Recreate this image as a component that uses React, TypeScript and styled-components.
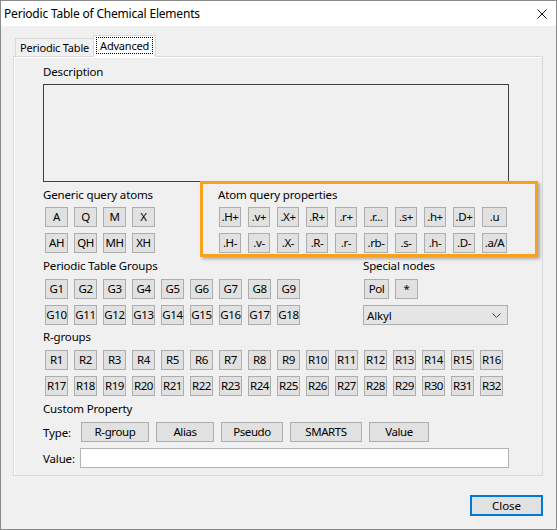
import React from "react";
import styled, { createGlobalStyle } from "styled-components";

const GlobalStyle = createGlobalStyle`
  html, body {
    margin: 0;
    padding: 0;
    background: #fff;
  }
  body {
    font-family: "Noto Sans", "Segoe UI", sans-serif;
    font-size: 11.5px;
    letter-spacing: -0.15px;
    color: #000;
  }
  * {
    box-sizing: border-box;
  }
`;

const genericAtoms = [["A", "Q", "M", "X"], ["AH", "QH", "MH", "XH"]];
const atomProps = [
  [".H+", ".v+", ".X+", ".R+", ".r+", ".r...", ".s+", ".h+", ".D+", ".u"],
  [".H-", ".v-", ".X-", ".R-", ".r-", ".rb-", ".s-", ".h-", ".D-", ".a/A"],
];
const groups = Array.from({ length: 18 }, (_, i) => `G${i + 1}`);
const rgroups = Array.from({ length: 32 }, (_, i) => `R${i + 1}`);
const types = [
  { label: "R-group", w: 68 },
  { label: "Alias", w: 58 },
  { label: "Pseudo", w: 62 },
  { label: "SMARTS", w: 72 },
  { label: "Value", w: 60 },
];

export default function App() {
  return (
    <>
      <GlobalStyle />
      <Window>
        <TitleBar>
          <span>Periodic Table of Chemical Elements</span>
          <svg width="10" height="10" viewBox="0 0 10 10">
            <path d="M0.5 0.5 L9.5 9.5 M9.5 0.5 L0.5 9.5" stroke="#111" strokeWidth="1" />
          </svg>
        </TitleBar>
        <Body>
          <TabBar>
            <Tab>Periodic Table</Tab>
            <Tab $active>
              <FocusText>Advanced</FocusText>
            </Tab>
          </TabBar>
          <Panel>
            <Label>Description</Label>
            <DescBox />

            <Row $mt={5}>
              <Column $w={175}>
                <Label>Generic query atoms</Label>
                <ButtonGrid $cols="repeat(4, 23px)" $gap={6} $mt={4} $ml={2}>
                  {genericAtoms.flat().map((a) => (
                    <SmallButton key={a}>{a}</SmallButton>
                  ))}
                </ButtonGrid>
              </Column>
              <HighlightColumn>
                <Label>Atom query properties</Label>
                <ButtonGrid
                  $cols="22px 22px 22px 22px 22px 24px 22px 22px 22px 25px"
                  $gap={7}
                  $mt={4}
                  $ml={1}
                >
                  {atomProps.flat().map((a) => (
                    <SmallButton key={a}>{a}</SmallButton>
                  ))}
                </ButtonGrid>
                <Highlight />
              </HighlightColumn>
            </Row>

            <Row $mt={5}>
              <Column $w={320}>
                <Label>Periodic Table Groups</Label>
                <ButtonGrid $cols="repeat(9, 23px)" $gap={6} $mt={5} $ml={2}>
                  {groups.map((g) => (
                    <SmallButton key={g}>{g}</SmallButton>
                  ))}
                </ButtonGrid>
              </Column>
              <Column>
                <Label>Special nodes</Label>
                <SpecialRow>
                  <SmallButton $w={25}>Pol</SmallButton>
                  <SmallButton $w={23}>*</SmallButton>
                </SpecialRow>
                <Combo>
                  <span>Alkyl</span>
                  <svg width="9" height="5" viewBox="0 0 9 5">
                    <path d="M0.5 0.5 L4.5 4.5 L8.5 0.5" fill="none" stroke="#444" strokeWidth="1" />
                  </svg>
                </Combo>
              </Column>
            </Row>

            <Label $mt={4}>R-groups</Label>
            <ButtonGrid $cols="repeat(16, 23px)" $gap={6} $mt={5} $ml={2}>
              {rgroups.map((r) => (
                <SmallButton key={r}>{r}</SmallButton>
              ))}
            </ButtonGrid>

            <Label $mt={5}>Custom Property</Label>
            <FieldRow $mt={5}>
              <FieldLabel $w={38}>Type:</FieldLabel>
              <TypeButtons>
                {types.map((t) => (
                  <SmallButton key={t.label} $w={t.w}>
                    {t.label}
                  </SmallButton>
                ))}
              </TypeButtons>
            </FieldRow>
            <FieldRow $mt={6}>
              <FieldLabel $w={37}>Value:</FieldLabel>
              <ValueInput />
            </FieldRow>
          </Panel>
          <Footer>
            <DefaultButton>Close</DefaultButton>
          </Footer>
        </Body>
      </Window>
    </>
  );
}

const Window = styled.div`
  width: 557px;
  height: 530px;
  border: 1px solid #8a8a8a;
  display: flex;
  flex-direction: column;
  background: #f0f0f0;
`;

const TitleBar = styled.div`
  height: 25px;
  flex-shrink: 0;
  background: #fff;
  display: flex;
  align-items: center;
  justify-content: space-between;
  padding: 0 9px 0 3px;
  font-size: 12px;
  letter-spacing: -0.2px;
`;

const Body = styled.div`
  flex: 1;
  display: flex;
  flex-direction: column;
  padding: 9px 13px 0 12px;
`;

const TabBar = styled.div`
  display: flex;
  align-items: flex-end;
  height: 21px;
  padding-left: 2px;
  position: relative;
  z-index: 1;
`;

const Tab = styled.div<{ $active?: boolean }>`
  display: flex;
  align-items: center;
  justify-content: center;
  font-size: 11px;
  letter-spacing: -0.2px;
  border: 1px solid #d9d9d9;
  border-bottom: none;
  background: ${(p) => (p.$active ? "#fff" : "#f0f0f0")};
  height: ${(p) => (p.$active ? "22px" : "18px")};
  margin-bottom: ${(p) => (p.$active ? "-1px" : "0")};
  margin-left: ${(p) => (p.$active ? "-1px" : "0")};
  padding: ${(p) => (p.$active ? "0 2px 2px" : "0 4px")};
  white-space: nowrap;
`;

const FocusText = styled.span`
  outline: 1px dotted #000;
  outline-offset: -1px;
  padding: 0 4px;
  line-height: 17px;
`;

const Panel = styled.div`
  height: 420px;
  border: 1px solid #d9d9d9;
  box-shadow: inset 1px 1px 0 #fff;
  padding: 7px 33px 0 29px;
  display: flex;
  flex-direction: column;
`;

const Label = styled.div<{ $mt?: number }>`
  line-height: 16px;
  height: 16px;
  margin-top: ${(p) => p.$mt ?? 0}px;
  white-space: nowrap;
`;

const DescBox = styled.div`
  margin-top: 4px;
  height: 98px;
  border: 1px solid #404040;
  background: #f0f0f0;
`;

const Row = styled.div<{ $mt?: number }>`
  display: flex;
  margin-top: ${(p) => p.$mt ?? 0}px;
`;

const Column = styled.div<{ $w?: number }>`
  display: flex;
  flex-direction: column;
  width: ${(p) => (p.$w ? `${p.$w}px` : "auto")};
  flex: ${(p) => (p.$w ? "none" : "1")};
`;

const HighlightColumn = styled(Column)`
  position: relative;
`;

const Highlight = styled.div`
  position: absolute;
  left: -18px;
  top: -6px;
  right: -29px;
  bottom: -4px;
  border: 3px solid #f8a11c;
  box-shadow: 2px 2px 3px rgba(0, 0, 0, 0.3);
  pointer-events: none;
`;

const ButtonGrid = styled.div<{ $cols: string; $gap: number; $mt: number; $ml: number }>`
  display: grid;
  grid-template-columns: ${(p) => p.$cols};
  column-gap: ${(p) => p.$gap}px;
  row-gap: 6px;
  margin-top: ${(p) => p.$mt}px;
  margin-left: ${(p) => p.$ml}px;
`;

const SmallButton = styled.button<{ $w?: number }>`
  height: 20px;
  width: ${(p) => (p.$w ? `${p.$w}px` : "auto")};
  padding: 0;
  border: 1px solid #adadad;
  background: #e1e1e1;
  font-family: "Noto Sans", "Segoe UI", sans-serif;
  font-size: 11.5px;
  color: #000;
  line-height: 16px;
  white-space: nowrap;
  overflow: hidden;
  letter-spacing: -0.4px;
`;

const SpecialRow = styled.div`
  display: flex;
  gap: 6px;
  margin: 5px 0 0 1px;
`;

const Combo = styled.div`
  margin-top: 6px;
  width: 145px;
  height: 20px;
  border: 1px solid #adadad;
  background: #e5e5e5;
  display: flex;
  align-items: center;
  justify-content: space-between;
  padding: 0 6px 0 3px;
`;

const FieldRow = styled.div<{ $mt: number }>`
  display: flex;
  align-items: center;
  margin-top: ${(p) => p.$mt}px;
`;

const FieldLabel = styled.div<{ $w: number }>`
  width: ${(p) => p.$w}px;
  flex: none;
`;

const TypeButtons = styled.div`
  display: flex;
  gap: 7px;
`;

const ValueInput = styled.div`
  flex: 1;
  height: 20px;
  background: #fff;
  border: 1px solid #b4b4b4;
`;

const Footer = styled.div`
  display: flex;
  justify-content: flex-end;
  margin-top: 19px;
`;

const DefaultButton = styled.button`
  width: 73px;
  height: 21px;
  border: 2px solid #0078d7;
  background: #e1e1e1;
  font-family: "Noto Sans", "Segoe UI", sans-serif;
  font-size: 11.5px;
  color: #000;
  padding: 0;
`;
